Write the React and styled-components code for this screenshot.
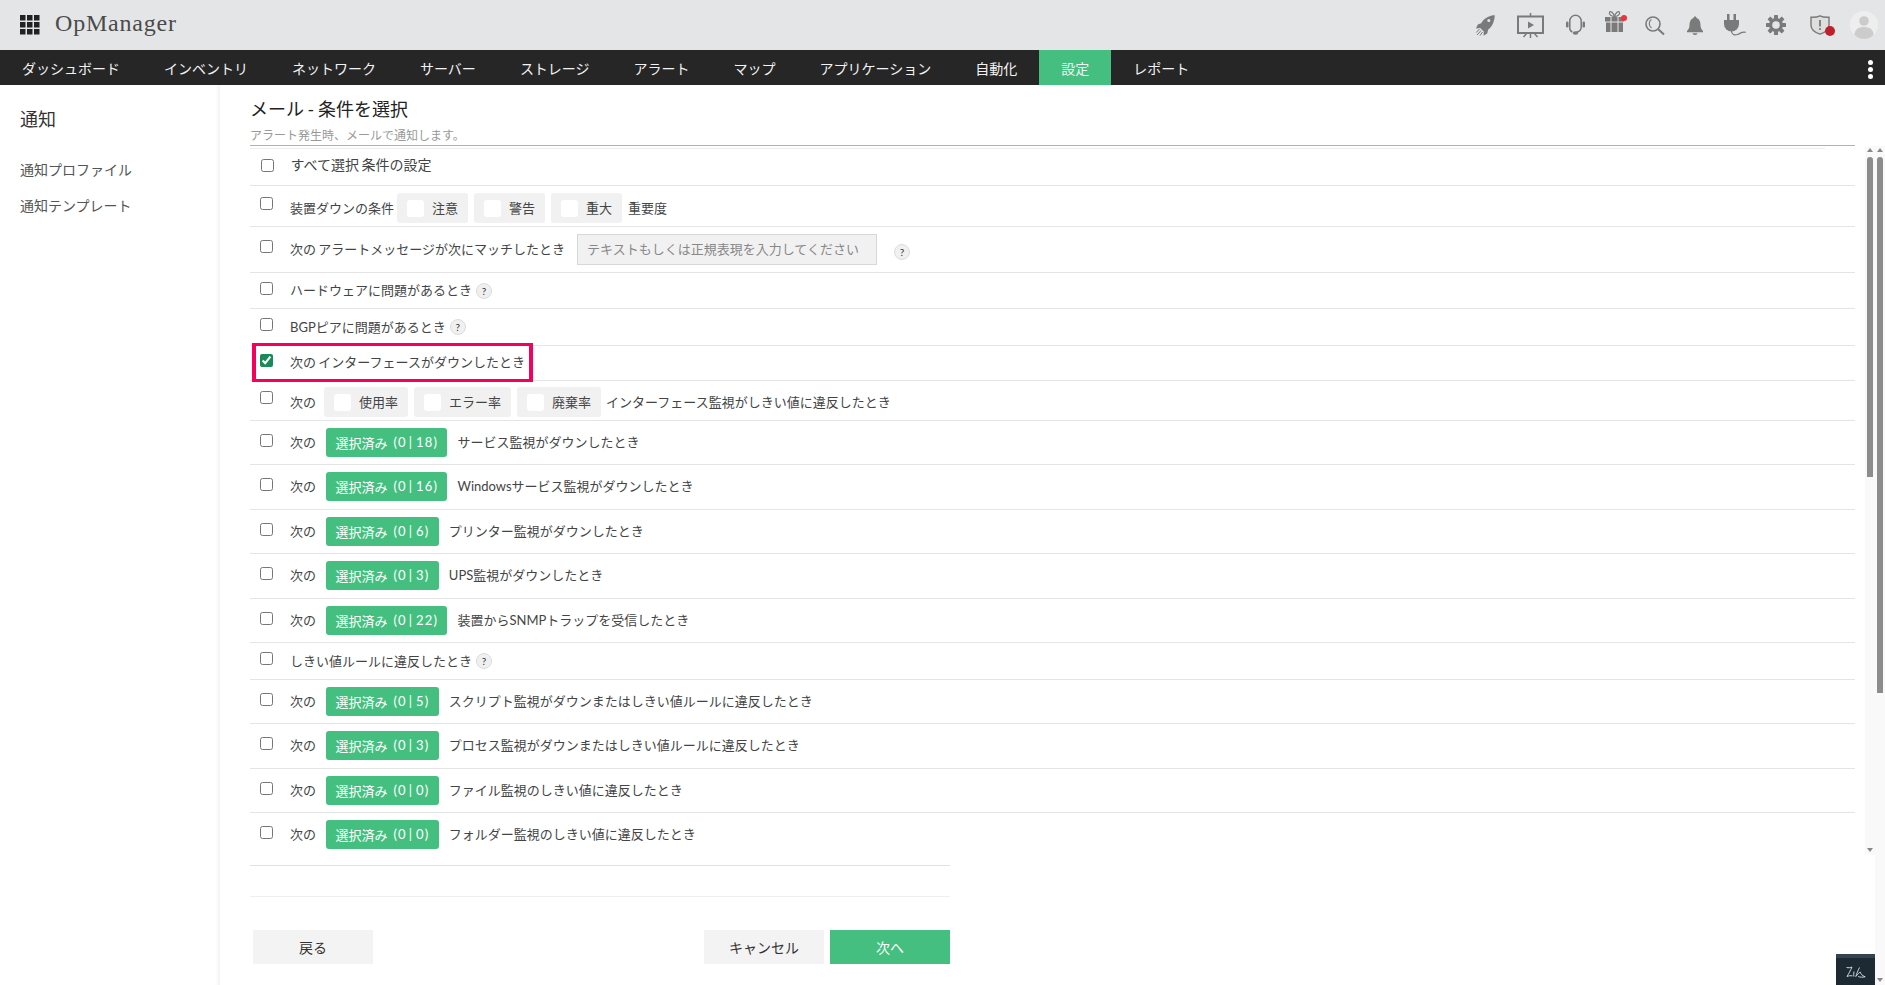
import React from 'react'
import styled, { createGlobalStyle } from 'styled-components'

const GlobalStyle = createGlobalStyle`
  html, body {
    margin: 0;
    padding: 0;
    background: #fff;
  }
  body {
    font-family: Lato, "Noto Sans CJK JP", sans-serif;
    color: #444;
  }
`

const Page = styled.div`
  position: relative;
  width: 1885px;
  height: 985px;
  overflow: hidden;
  display: flex;
  flex-direction: column;
`

/* top bar */
const Header = styled.header`
  height: 50px;
  flex: none;
  background: #e4e5e7;
  display: flex;
  align-items: center;
  justify-content: space-between;
  padding: 0 7px 0 20px;
`
const Brand = styled.div`
  display: flex;
  align-items: center;
  gap: 15px;
`
const BrandName = styled.span`
  font-family: "Liberation Serif", serif;
  font-size: 24px;
  letter-spacing: 0.8px;
  color: #4a4a4a;
  margin-bottom: 4px;
`
const Tools = styled.div`
  display: flex;
  align-items: center;
`
const Tool = styled.svg`
  flex: none;
  display: block;
  overflow: visible;
  margin-left: ${(p) => p.$gap || 0}px;
  margin-bottom: ${(p) => p.$lift || 0}px;
  fill: #7a7a7a;
`

const Nav = styled.nav`
  height: 35px;
  flex: none;
  background: #262626;
  display: flex;
  align-items: stretch;
  justify-content: space-between;
`
const NavList = styled.div`
  display: flex;
`
const NavItem = styled.a`
  padding: 1px 22px 0;
  display: flex;
  align-items: center;
  font-size: 14px;
  color: #f2f2f2;
  background: ${(p) => (p.$active ? '#45bf80' : 'transparent')};
`
const Kebab = styled.div`
  display: flex;
  flex-direction: column;
  justify-content: center;
  gap: 2px;
  margin: 3px 12px 0 0;
`
const KebabDot = styled.span`
  width: 5px;
  height: 5px;
  border-radius: 50%;
  background: #fff;
`

const Body = styled.div`
  flex: 1;
  display: flex;
  min-height: 0;
`

/* left menu */
const Sidebar = styled.aside`
  width: 220px;
  flex: none;
  padding: 21px 20px 0;
  box-sizing: border-box;
  box-shadow: inset -5px 0 5px -4px #ececec;
`
const SideTitle = styled.div`
  font-size: 18px;
  line-height: 26px;
  color: #333;
  margin-bottom: 28px;
`
const SideLink = styled.a`
  display: block;
  font-size: 14px;
  line-height: 20px;
  color: #555;
  margin-bottom: 16px;
`

const Main = styled.main`
  flex: 1;
  min-width: 0;
  display: flex;
  flex-direction: column;
  padding-left: 30px;
`
const Heading = styled.div`
  height: 61px;
  flex: none;
  margin-right: 30px;
  box-sizing: border-box;
  border-bottom: 1px solid #b2b2b2;
`
const Title = styled.h1`
  margin: 0;
  padding-top: 11px;
  font-size: 18px;
  line-height: 26px;
  font-weight: 400;
  word-spacing: -1px;
  color: #222;
`
const Subtitle = styled.div`
  margin-top: 6px;
  font-size: 12px;
  line-height: 16px;
  color: #999;
`
const Split = styled.div`
  flex: 1;
  display: flex;
  min-height: 0;
`
const Column = styled.div`
  flex: 1;
  min-width: 0;
`
const Scroller = styled.div`
  height: 709px;
  display: flex;
`
const RowList = styled.div`
  flex: 1;
  min-width: 0;
  margin-right: 10px;
  padding-top: 2px;
`
const TopRule = styled.div`
  height: 1px;
  margin-right: 30px;
  background: #eee;
`

const Rail = styled.div`
  width: 10px;
  flex: none;
  background: #f9f9f9;
  display: flex;
  flex-direction: column;
  align-items: center;
  justify-content: space-between;
  padding: 2px 0 3px;
  box-sizing: border-box;
`
const RailTop = styled.div`
  display: flex;
  flex-direction: column;
  align-items: center;
  gap: 5px;
`
const ArrowUp = styled.span`
  width: 0;
  height: 0;
  border-left: 3.5px solid transparent;
  border-right: 3.5px solid transparent;
  border-bottom: 4px solid #888;
`
const ArrowDown = styled.span`
  width: 0;
  height: 0;
  border-left: 3.5px solid transparent;
  border-right: 3.5px solid transparent;
  border-top: 4px solid #888;
`
const Thumb = styled.span`
  width: 6px;
  height: ${(p) => p.$h}px;
  border-radius: 3px 3px 0 0;
  background: #8c8c8c;
`

/* condition rows */
const Row = styled.div`
  position: relative;
  height: ${(p) => p.$h}px;
  box-sizing: border-box;
  border-bottom: ${(p) => (p.$last ? 'none' : '1px solid #e5e5e5')};
  display: flex;
  align-items: center;
  padding-left: ${(p) => p.$inset || 10}px;
`
const Check = styled.input.attrs({ type: 'checkbox' })`
  flex: none;
  width: 13px;
  height: 13px;
  margin: 0 17px ${(p) => p.$lift ?? 5}px 0;
  accent-color: #1b8a5a;
`
const Cells = styled.div`
  display: flex;
  align-items: center;
  margin-top: ${(p) => p.$drop || 0}px;
  font-size: ${(p) => p.$size || 13}px;
  color: #444;
`
const Text = styled.span`
  white-space: pre;
  margin-bottom: 2px;
  word-spacing: -1px;
`
const ChipGroup = styled.div`
  display: flex;
  gap: 6px;
  margin: 0 ${(p) => p.$after}px 0 ${(p) => p.$gap}px;
`
const Chip = styled.label`
  height: 30px;
  padding: 0 10px;
  display: flex;
  align-items: center;
  gap: 8px;
  border-radius: 3px;
  background: #f1f1f1;
`
const ChipBox = styled.span`
  width: 17px;
  height: 17px;
  border-radius: 3px;
  background: #fff;
`
const PatternInput = styled.input`
  width: 300px;
  height: 31px;
  box-sizing: border-box;
  margin-left: 12px;
  padding: 0 9px 2px;
  border: 1px solid #d8d8d8;
  background: #f1f1f1;
  font: inherit;
  &::placeholder {
    color: #888;
    opacity: 1;
  }
`
const Help = styled.span`
  width: 16px;
  height: 16px;
  box-sizing: border-box;
  flex: none;
  margin: ${(p) => p.$down || 0}px 0 0 ${(p) => p.$gap}px;
  display: flex;
  align-items: center;
  justify-content: center;
  border-radius: 50%;
  border: 1px solid #dcdcdc;
  background: #f0f0f0;
  font-size: 10px;
  color: #333;
`
const Picker = styled.button`
  height: 29.5px;
  margin: 0 10px;
  padding: 0 9.5px 1px;
  border: 0;
  border-radius: 3px;
  background: #45bf80;
  color: #fff;
  font: inherit;
  font-size: 13px;
  display: flex;
  align-items: center;
`
const Count = styled.span`
  margin-left: 6px;
  letter-spacing: 1.1px;
`
const Pipe = styled.span`
  margin: 0 3px 0 2px;
`
const Highlight = styled.div`
  position: absolute;
  left: 2px;
  top: -3px;
  width: 281px;
  height: 39px;
  box-sizing: border-box;
  border: solid #f5005a;
  border-width: 3.5px 4px;
  pointer-events: none;
`

/* bottom of the form */
const Footer = styled.div`
  width: 700px;
  padding-top: 10px;
`
const FooterRule = styled.div`
  height: 30px;
  border-top: 1px solid #e2e2e2;
  border-bottom: 1px solid #efefef;
`
const Actions = styled.div`
  margin-top: 33px;
  padding-left: 3px;
  display: flex;
  justify-content: space-between;
`
const ActionGroup = styled.div`
  display: flex;
  gap: 6px;
`
const Action = styled.button`
  width: 120px;
  height: 34px;
  border: 0;
  padding-bottom: 2px;
  font: inherit;
  font-size: 14px;
  color: ${(p) => (p.$primary ? '#fff' : '#333')};
  background: ${(p) => (p.$primary ? '#45bf80' : '#f3f3f3')};
`
const Zia = styled.div`
  position: absolute;
  right: 10px;
  bottom: 0;
  width: 39px;
  height: 31px;
  box-sizing: border-box;
  border-top: 4px solid #34444f;
  background: #1e2a33;
  display: flex;
  align-items: center;
  justify-content: center;
`

const navItems = ['ダッシュボード', 'インベントリ', 'ネットワーク', 'サーバー', 'ストレージ', 'アラート', 'マップ', 'アプリケーション', '自動化', '設定', 'レポート']

const Picked = ({ total }) => (
  <Picker>
    選択済み
    <Count>
      (0<Pipe>|</Pipe>
      {total})
    </Count>
  </Picker>
)

const PickerRow = ({ h, total, text, last }) => (
  <Row $h={h} $last={last}>
    <Check />
    <Cells $drop={h === 45 || last ? -1 : 0}>
      <Text>次の</Text>
      <Picked total={total} />
      <Text>{text}</Text>
    </Cells>
  </Row>
)

const Chips = ({ gap, after, items }) => (
  <ChipGroup $gap={gap} $after={after}>
    {items.map((item) => (
      <Chip key={item}>
        <ChipBox />
        <Text>{item}</Text>
      </Chip>
    ))}
  </ChipGroup>
)

const gearTeeth = [0, 45, 90, 135]

const HeaderIcons = () => (
  <Tools>
    <Tool width="18" height="21" viewBox="0 0 18 21">
      <path d="M17.800.2C12 .8 7.500 4 5.200 8.200L1.800 9.400 0 13.400l4.200-.4 3.600 3.600-.3 4.200 3.700-2.400 1-3.800c4-3 6.200-8 6.600-14.400z" />
      <circle cx="12.800" cy="5.600" r="1.500" fill="#e4e5e7" />
      <path d="M3.500 14 .3 17.500M5 15.500 1.200 20M6.500 17l-2.500 3.500" stroke="#7a7a7a" strokeWidth="1" />
    </Tool>
    <Tool $gap={23} width="27" height="25" viewBox="0 0 27 25">
      <rect x="1" y="3.500" width="25" height="16.500" fill="none" stroke="#7a7a7a" strokeWidth="2" />
      <path d="M13.500 0v3M13.500 20v5M9.500 20.500 6.500 24M17.500 20.500l3 3.500" stroke="#7a7a7a" strokeWidth="1.500" />
      <path d="M11 8.500l6 3.500-6 3.500z" />
    </Tool>
    <Tool $gap={22} width="19" height="20" viewBox="0 0 19 20">
      <path d="M3.800 10V6a5.700 5.700 0 0 1 11.400 0v6c0 3-2 4.800-5 5.300M3.800 10v3c0 2 1 3.400 2.600 4" fill="none" stroke="#7a7a7a" strokeWidth="1.500" />
      <rect x="0" y="6.500" width="2.500" height="6" rx="1.200" />
      <rect x="16.500" y="6.500" width="2.500" height="6" rx="1.200" />
      <ellipse cx="9.500" cy="18" rx="2.800" ry="1.800" />
    </Tool>
    <Tool $gap={20} $lift={8} width="22" height="22" viewBox="0 0 22 22">
      <path d="M9.500 6.500C7 6.500 3.500 4.500 4.500 2.200 5.500.4 8.500 2.500 9.500 6.500zM9.500 6.500c2.500 0 6-2 5-4.300-1-1.800-4 .3-5 4.300z" fill="none" stroke="#7a7a7a" strokeWidth="1.200" />
      <rect x="0" y="7" width="5.500" height="4.500" />
      <rect x="6.500" y="7" width="6" height="4.500" />
      <rect x="13.500" y="7" width="5.500" height="4.500" />
      <rect x="1" y="12.500" width="4.500" height="9.500" />
      <rect x="6.500" y="12.500" width="6" height="9.500" />
      <rect x="13.500" y="12.500" width="4.500" height="9.500" />
      <circle cx="19" cy="8" r="3" fill="#f0303a" />
    </Tool>
    <Tool $gap={18} width="20" height="19" viewBox="0 0 20 19">
      <circle cx="8" cy="8" r="7" fill="none" stroke="#7a7a7a" strokeWidth="1.600" />
      <path d="M6.500 3.500C3.500 5 3.500 10 6.500 12" fill="none" stroke="#7a7a7a" strokeWidth="1.200" />
      <path d="M13 13l6 5.500" stroke="#7a7a7a" strokeWidth="2" />
    </Tool>
    <Tool $gap={22} width="16" height="19" viewBox="0 0 16 19">
      <path d="M8 .4c1 0 1.500.7 1.500 1.500 3 1 4 4 4 7 0 3 1 4.500 2.500 6v1.300H0v-1.300c1.500-1.500 2.500-3 2.500-6 0-3 1-6 4-7C6.500 1.100 7 .4 8 .4z" />
      <path d="M5.500 17.200h5a2.500 1.800 0 0 1-5 0z" />
    </Tool>
    <Tool $gap={21} width="22" height="22" viewBox="0 0 22 22">
      <rect x="3" y="0" width="2.500" height="6" />
      <rect x="9.500" y="0" width="2.500" height="6" />
      <path d="M0 6h15v4a7.500 7.500 0 0 1-15 0z" />
      <path d="M7.500 17c0 3.500 3 4.500 6 3.500s4-3 8.200-2.200" fill="none" stroke="#7a7a7a" strokeWidth="1.200" />
    </Tool>
    <Tool $gap={20} width="20" height="20" viewBox="0 0 20 20">
      <mask id="gear-hole">
        <rect x="-2" y="-2" width="24" height="24" fill="#fff" />
        <circle cx="10" cy="10" r="3.800" fill="#000" />
      </mask>
      <g mask="url(#gear-hole)">
        <circle cx="10" cy="10" r="7" />
        {gearTeeth.map((deg) => (
          <rect key={deg} x="8" y="0" width="4" height="20" rx="0.500" transform={`rotate(${deg} 10 10)`} />
        ))}
      </g>
    </Tool>
    <Tool $gap={24} width="20" height="20" viewBox="0 0 20 20">
      <path d="M1 2.200C5 2.500 7.500 2 10 .8c2.500 1.200 5 1.700 9 1.400v8c0 4-3.500 7-9 9-5.500-2-9-5-9-9z" fill="#dedede" stroke="#7a7a7a" strokeWidth="1.400" />
      <rect x="9.100" y="5" width="1.800" height="6.500" />
      <circle cx="10" cy="14" r="1.100" />
      <circle cx="20" cy="16" r="5" fill="#c0202e" />
    </Tool>
    <Tool $gap={20} width="28" height="28" viewBox="0 0 28 28">
      <circle cx="14" cy="14" r="14" fill="#eeeeee" />
      <circle cx="14" cy="10" r="4.800" fill="#cccccc" />
      <path d="M4.500 24c0-5.500 4-8 9.500-8s9.500 2.500 9.500 8c-2.500 2.500-6 4-9.500 4s-7-1.500-9.500-4z" fill="#cccccc" />
    </Tool>
  </Tools>
)

export default function App() {
  return (
    <Page>
      <GlobalStyle />
      <Header>
        <Brand>
          <svg width="20" height="20" viewBox="0 0 20 20" fill="#222">
            {[0, 7, 14].flatMap((y) =>
              [0, 7, 14].map((x) => <rect key={`${x}-${y}`} x={x} y={y} width="5.500" height="5.500" />)
            )}
          </svg>
          <BrandName>OpManager</BrandName>
        </Brand>
        <HeaderIcons />
      </Header>
      <Nav>
        <NavList>
          {navItems.map((item) => (
            <NavItem key={item} $active={item === '設定'}>
              {item}
            </NavItem>
          ))}
        </NavList>
        <Kebab>
          <KebabDot />
          <KebabDot />
          <KebabDot />
        </Kebab>
      </Nav>
      <Body>
        <Sidebar>
          <SideTitle>通知</SideTitle>
          <SideLink>通知プロファイル</SideLink>
          <SideLink>通知テンプレート</SideLink>
        </Sidebar>
        <Main>
          <Heading>
            <Title>メール - 条件を選択</Title>
            <Subtitle>アラート発生時、メールで通知します。</Subtitle>
          </Heading>
          <Split>
            <Column>
              <Scroller>
                <RowList>
                  <TopRule />
                  <Row $h={37} $inset={10.5}>
                    <Check $lift={3} />
                    <Cells $drop={-5} $size={14}>
                      <Text>すべて選択 条件の設定</Text>
                    </Cells>
                  </Row>
                  <Row $h={41}>
                    <Check $lift={6} />
                    <Cells $drop={4}>
                      <Text>装置ダウンの条件</Text>
                      <Chips gap={3} after={6} items={['注意', '警告', '重大']} />
                      <Text>重要度</Text>
                    </Cells>
                  </Row>
                  <Row $h={46}>
                    <Check $lift={7} />
                    <Cells>
                      <Text>次の アラートメッセージが次にマッチしたとき</Text>
                      <PatternInput readOnly placeholder="テキストもしくは正規表現を入力してください" />
                      <Help $gap={17} $down={5}>?</Help>
                    </Cells>
                  </Row>
                  <Row $h={36}>
                    <Check />
                    <Cells>
                      <Text>ハードウェアに問題があるとき</Text>
                      <Help $gap={4}>?</Help>
                    </Cells>
                  </Row>
                  <Row $h={37}>
                    <Check />
                    <Cells>
                      <Text>BGPピアに問題があるとき</Text>
                      <Help $gap={4}>?</Help>
                    </Cells>
                  </Row>
                  <Row $h={35}>
                    <Highlight />
                    <Check defaultChecked />
                    <Cells $drop={-2}>
                      <Text>次の インターフェースがダウンしたとき</Text>
                    </Cells>
                  </Row>
                  <Row $h={40}>
                    <Check $lift={7} />
                    <Cells $drop={3}>
                      <Text>次の</Text>
                      <Chips gap={8} after={5} items={['使用率', 'エラー率', '廃棄率']} />
                      <Text>インターフェース監視がしきい値に違反したとき</Text>
                    </Cells>
                  </Row>
                  <PickerRow h={44} total={18} text="サービス監視がダウンしたとき" />
                  <PickerRow h={45} total={16} text="Windowsサービス監視がダウンしたとき" />
                  <PickerRow h={44} total={6} text="プリンター監視がダウンしたとき" />
                  <PickerRow h={45} total={3} text="UPS監視がダウンしたとき" />
                  <PickerRow h={44} total={22} text="装置からSNMPトラップを受信したとき" />
                  <Row $h={37}>
                    <Check />
                    <Cells>
                      <Text>しきい値ルールに違反したとき</Text>
                      <Help $gap={4}>?</Help>
                    </Cells>
                  </Row>
                  <PickerRow h={44} total={5} text="スクリプト監視がダウンまたはしきい値ルールに違反したとき" />
                  <PickerRow h={45} total={3} text="プロセス監視がダウンまたはしきい値ルールに違反したとき" />
                  <PickerRow h={44} total={0} text="ファイル監視のしきい値に違反したとき" />
                  <PickerRow h={44} total={0} text="フォルダー監視のしきい値に違反したとき" last />
                </RowList>
                <Rail>
                  <RailTop>
                    <ArrowUp />
                    <Thumb $h={320} />
                  </RailTop>
                  <ArrowDown />
                </Rail>
              </Scroller>
              <Footer>
                <FooterRule />
                <Actions>
                  <Action>戻る</Action>
                  <ActionGroup>
                    <Action>キャンセル</Action>
                    <Action $primary>次へ</Action>
                  </ActionGroup>
                </Actions>
              </Footer>
            </Column>
            <Rail>
              <RailTop>
                <ArrowUp />
                <Thumb $h={536} />
              </RailTop>
              <ArrowDown />
            </Rail>
          </Split>
        </Main>
      </Body>
      <Zia>
        <svg width="20" height="14" viewBox="0 0 20 14" fill="none" stroke="#dfe3e6" strokeWidth="0.900">
          <path d="M.5 2.500C2.500 3 4.500 2.600 6 2 4.500 5.500 2.500 9 1 11.500c2-.8 3.500-1 5.500-.6" />
          <path d="M8 6.500c-.3 2-.4 3.500-.2 5" />
          <path d="M13.500 2.500C12 5.500 10.500 9 9.800 11.500c1.800-2.300 3.300-3.800 4.400-4.500.5 1.500 1.500 3.600 5 4.800-2.500.6-5 .5-7-.3" />
        </svg>
      </Zia>
    </Page>
  )
}
